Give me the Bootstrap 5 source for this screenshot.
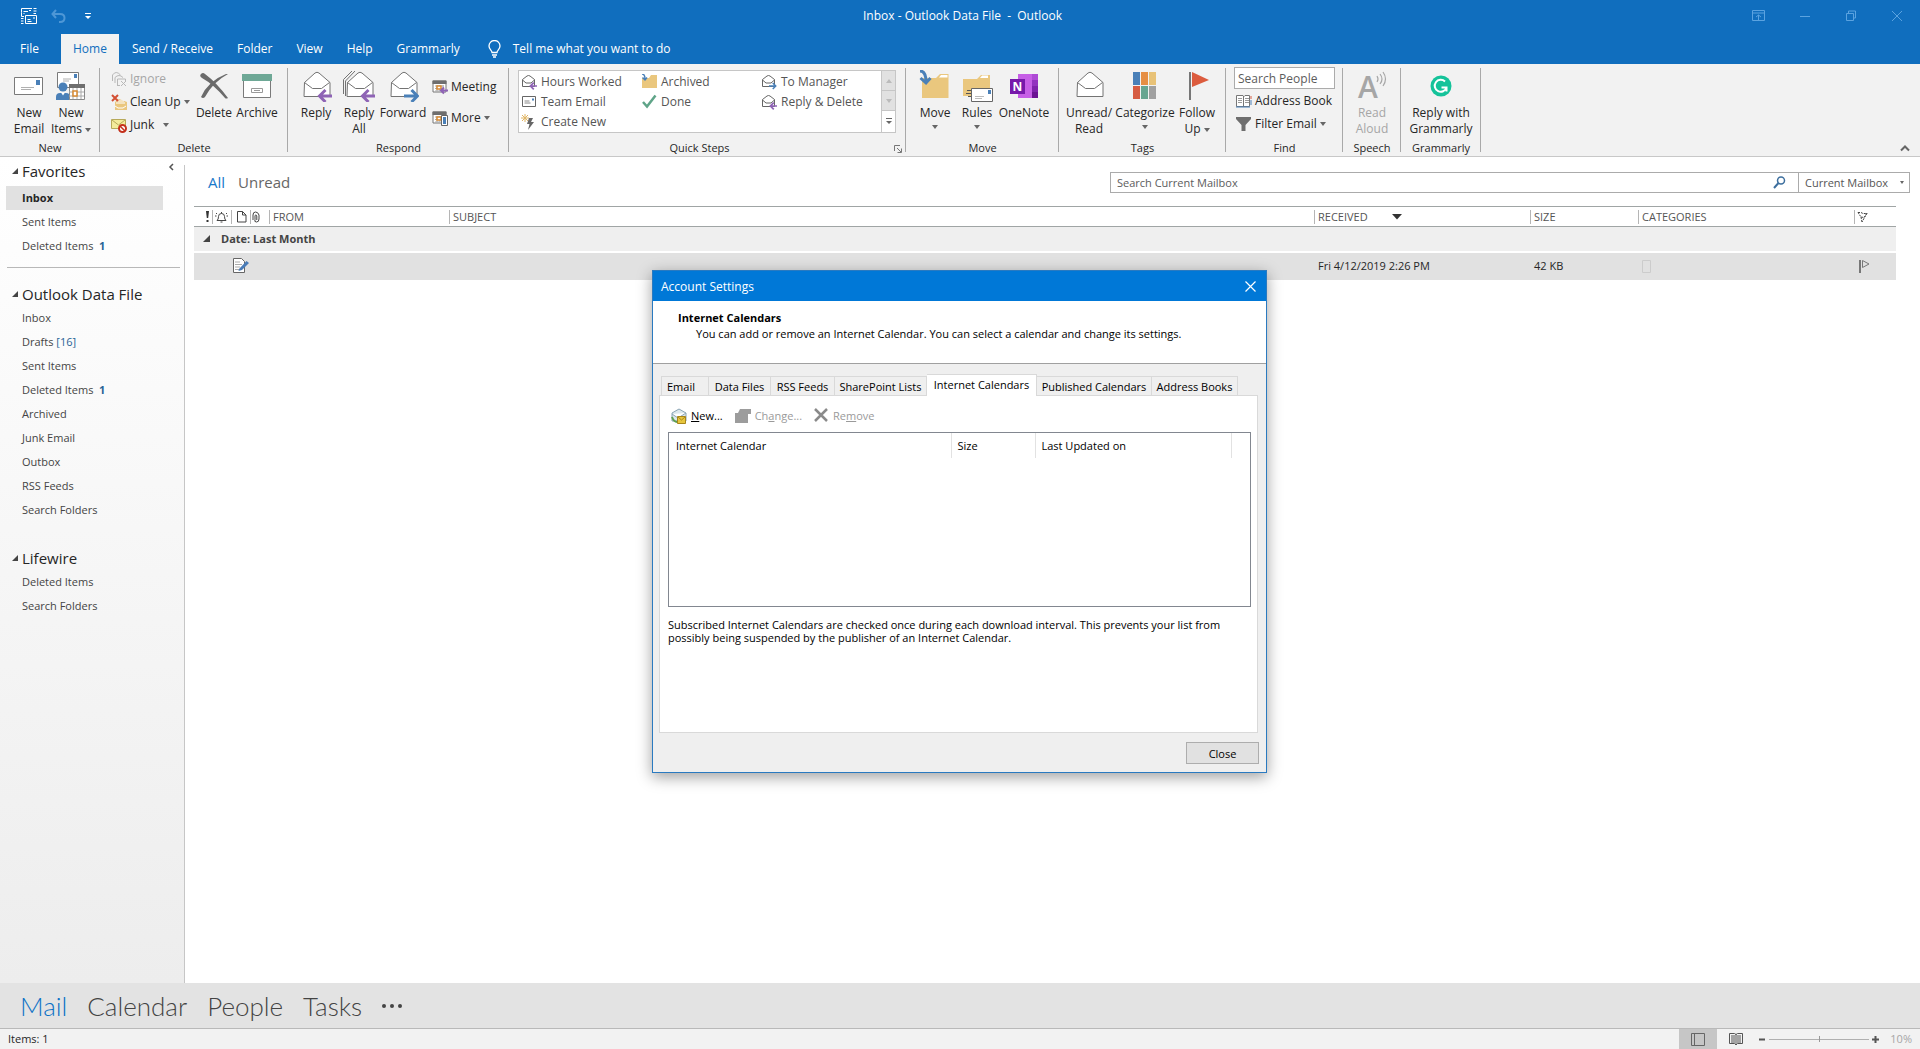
<!DOCTYPE html>
<html lang="en">
<head>
<meta charset="utf-8">
<meta name="viewport" content="width=device-width, initial-scale=1">
<title>Inbox - Outlook Data File - Outlook</title>
<link href="https://cdn.jsdelivr.net/npm/bootstrap@5.3.0/dist/css/bootstrap.min.css" rel="stylesheet">
<style>
:root{--blue:#106ebe;--ribbon:#f2f2f2;--line:#ababab}
body{font-family:"Open Sans","Noto Sans",sans-serif;font-size:12px;line-height:16px;color:#262626;background:#fff}
svg{display:block;flex:none}
button{background:none;border:0;padding:0;color:inherit;text-align:left}
a{color:inherit;text-decoration:none}
.app{min-height:100vh}
.topbar{background:var(--blue);color:#fff}
.titlebar{height:34px;padding-bottom:2px}
.titlebar .side{flex:1 1 0}
.winbtns{gap:32px;padding-right:16px;color:#5ba3e0}
.qat{gap:14px;padding-left:21px}
.tabs a{padding:7px 12px;height:30px}
.tabs a.file{width:61px;padding-left:20px}
.tabs a.on{background:var(--ribbon);color:var(--blue);margin-right:1px}
.tellme{padding-left:16px;gap:12px}
.ribbon{background:var(--ribbon);border-bottom:1px solid #c8c8c8;height:93px}
.grp{position:relative;display:flex;flex-direction:column}
.grp::after{content:"";position:absolute;right:0;top:4px;bottom:4px;width:1px;background:#a9a9a9}
.grp-body{height:76px;display:flex;align-items:flex-start}
.grp-name{text-align:center;line-height:16px;font-size:11px}
.big{display:flex;flex-direction:column;align-items:center;padding-top:6px;white-space:nowrap;text-align:center}
.big svg.ic{margin-bottom:3px}
.w38{width:38px}.w42{width:42px}.w44{width:44px}.w48{width:48px}.w52{width:52px}.w58{width:58px}.w60{width:60px}.w80{width:80px}
.small-btn{display:flex;align-items:center;gap:3px;height:23px;white-space:nowrap}
.car{display:inline-block;border:3px solid transparent;border-top:4px solid #666;border-bottom:0;vertical-align:middle;margin-left:3px}
.dim{color:#a6a6a6}
.pad-s{padding-left:2px}
.del-col{width:90px;padding:3px 0 0 9px}
.resp-col{padding:11px 0 0 7px;gap:8px}
.gallery{width:378px;height:63px;margin:6px 0 0 9px;background:#fff;border:1px solid #c6c6c6;color:#555}
.gallery .steps{display:grid;grid-template-columns:120px 120px 120px;grid-template-rows:20px 20px 20px;padding:1px 0 0 2px;flex:1}
.gallery .steps button{display:flex;gap:4px;align-items:center;white-space:nowrap}
.gal-scroll{width:16px;border-left:1px solid #c6c6c6}
.gal-scroll button{display:flex;align-items:center;justify-content:center;height:20px;width:100%}
.gal-scroll button:disabled{background:#e1e1e1;border-bottom:1px solid #c6c6c6}
.launch{position:absolute;right:4px;bottom:3px}
.people{width:101px;height:22px;border:1px solid #ababab;padding:0 3px;font-size:12px;color:#555;background:#fff;margin-top:3px}
.people::placeholder,.find-box::placeholder{color:#5c5c5c;opacity:1}
.side-nav{width:185px;background:linear-gradient(#fff,#f7f7f7 45%,#ededed);padding-top:2px;position:relative}
.side-nav::after{content:"";position:absolute;right:0;top:8px;bottom:0;width:1px;background:#c6c6c6}
.side-nav h2{font-size:15px;line-height:24px;font-weight:400;margin:0;padding-left:12px;display:flex;align-items:center;gap:4px}
.side-nav .fold{display:block;height:24px;line-height:24px;padding-left:16px;margin:0 22px 0 6px;color:#444;font-size:11px}
.side-nav .fold.on{background:#e1e1e1;font-weight:700;color:#262626}
.side-nav .num{color:#2a6496}
.side-nav hr{margin:9px 5px 14px 7px;border-color:#b8b8b8;opacity:1}
.fold-first{margin-top:3px!important}
.side-nav h2.later{margin-top:24px}
.collapse-pane{padding:0 11px 9px 0}
.list-area{padding:15px 10px 0 9px;min-width:0}
.filters{font-size:15px;line-height:20px;gap:13px;padding-left:14px;color:#666}
.searchbar{width:800px;height:21px;border:1px solid var(--line);background:#fff}
.find-box{flex:1;border:0;padding:0 6px;font-size:11px;min-width:0;height:19px}
.scope{border:0;border-left:1px solid var(--line);width:111px;height:19px;padding:0 6px;font-size:11px;color:#555;appearance:none;background:#fff}
.scopewrap{position:relative}
.scopewrap .car{position:absolute;right:5px;top:8px;pointer-events:none;border-width:3px 2px 0}
.mail{table-layout:fixed;width:calc(100% - 14px);margin-top:13px;border-collapse:collapse}
.mail th{font-size:11px;font-weight:400;color:#555;height:20px;padding:0;border-top:1px solid #a0a5a5;border-bottom:1px solid #a0a5a5;line-height:14px}
.mail th>div{border-right:1px solid #b5b5b5;height:14px;padding-left:3px;display:flex;align-items:center}
.mail th.ico>div{padding:0 2px 0 0;justify-content:center}
.mail th:last-child>div{border:0;padding-left:2px}
.mail .gh td{background:#efefef;border-bottom:2px solid #fff;height:25px;font-weight:700;color:#444;font-size:11px;padding:0}
.gh-in{gap:11px;padding-left:9px}
.mail .it td{background:#e1e1e1;height:28px;padding:0 0 0 3px;font-size:11px}
.sortmark{margin-left:24px}
.modbar{background:#e3e3e3;border-bottom:1px solid #b9b9b9;height:46px;font-family:Lato,"Open Sans",sans-serif;font-size:26px;font-weight:300;line-height:46px;padding-left:20px;gap:20px;color:#444}
.status{background:var(--ribbon);height:20px;font-size:11px;line-height:18px}
.vw{width:38px;height:20px;display:flex;align-items:center;justify-content:center}
.vw.on{background:#c6c6c6}
.zoomer{appearance:none;width:100px;height:10px;margin:0 3px;background:linear-gradient(#999,#999) 50% 50%/1px 6px no-repeat,linear-gradient(#b0b0b0,#b0b0b0) 0 50%/100% 1px no-repeat}
.zoomer::-webkit-slider-thumb{appearance:none;width:0;height:0}
.pct{margin:0 8px 0 11px}
.dlg{position:absolute;left:50%;top:270px;width:615px;margin-left:-308px;border:1px solid #2a7ac0;background:#efefef;box-shadow:0 4px 14px rgba(0,0,0,.38);color:#000;font-size:11px;line-height:13px}
.dlg-title{background:#0078d7;color:#fff;height:30px;padding:0 10px 0 8px;font-size:12px}
.dlg-head{background:#fff;border-bottom:1px solid #a0a0a0;height:63px;padding:10px 24px 10px 25px}
.dlg-head h1{font-size:11px;line-height:13px;font-weight:700;margin:0 0 3px}
.dlg-head p{margin:0 0 0 18px}
.dlg-tabs{padding:10px 0 0 8px;align-items:flex-end}
.dlg-tabs button{height:19px;border:1px solid #d9d9d9;border-left:0;border-bottom:0;text-align:center;white-space:nowrap;display:flex;justify-content:center;align-items:center}
.dlg-tabs button:first-child{border-left:1px solid #d9d9d9;justify-content:flex-start;padding-left:5px}
.dlg-tabs button.on{background:#fff;height:22px;margin-bottom:-1px;z-index:1;padding-bottom:3px}
.t48{width:48px}.t62{width:62px}.t64{width:64px}.t92{width:92px}.t110{width:110px}.t115{width:115px}.t86{width:86px}
.pane{background:#fff;border:1px solid #d9d9d9;margin:0 8px 0 6px;height:338px;padding:9px 6px 0 8px}
.tools{height:21px;gap:12px;padding-left:3px}
.tools button{display:flex;align-items:center;gap:4px}
.tools button:disabled{color:#9a9a9a}
.cals{margin-top:6px;height:175px;border:1px solid #828790;background:#fff}
.cals table{table-layout:fixed;width:563px}
.cals th{font-weight:400;height:25px;padding:0 0 0 6px;border-right:1px solid #e2e2e2}
.cals th:first-child{padding-left:7px}
.note{margin:11px 0 0}
.closer{background:#e1e1e1;border:1px solid #adadad;width:73px;height:22px;text-align:center;margin:9px 7px 8px 0}
</style>
</head>
<body>
<svg width="0" height="0" class="position-absolute" aria-hidden="true">
<symbol id="env" viewBox="0 0 32 32"><path d="M4.500 12.500L15 3q2-1.500 4 0l11 9.500v14h-26z" fill="#fff" stroke="#737373"/><path d="M4.500 12.500l8 6h9l8-6" fill="none" stroke="#737373"/></symbol>
<symbol id="left" viewBox="0 0 16 14"><path d="M16 7H3M8.500 1L2.500 7l6 6" fill="none" stroke="#8e63b5" stroke-width="3"/></symbol>
<symbol id="right" viewBox="0 0 16 14"><path d="M0 7h13M7.500 1l6 6-6 6" fill="none" stroke="#4a80b8" stroke-width="3"/></symbol>
<symbol id="senv" viewBox="0 0 16 16"><path d="M1.500 5.500L6 2q1.500-1 3 0l4.500 3.500v7h-12z" fill="#fff" stroke="#666"/><path d="M1.500 6l3.500 3h5l3.500-3" fill="none" stroke="#666"/></symbol>
<symbol id="folder" viewBox="0 0 32 32"><path d="M3 28V8h14l4-4h8.500v24z" fill="#eac77e"/><path d="M20 7.500L22 5h6.500v2.500z" fill="#fff"/></symbol>
<symbol id="cal" viewBox="0 0 16 16"><path d="M1 2h13v11H1z" fill="#fff" stroke="#777"/><path d="M.5 1.500h14V5H.5z" fill="#6e6e6e"/><path d="M3 7h9M3 9.500h9M3 12h5M5 6v6M8 6v6M11 6v5" stroke="#aaa" fill="none"/><path d="M5 7h4v3H5z" fill="#fff" stroke="#d98b32" stroke-width="1.500"/></symbol>
<symbol id="tri" viewBox="0 0 6 6"><path d="M6 0v6H0z" fill="#444"/></symbol>
</svg>
<div class="app d-flex flex-column position-relative">
<header class="topbar">
  <div class="titlebar d-flex align-items-center">
    <div class="side qat d-flex align-items-center">
      <button aria-label="Send and receive all folders"><svg width="16" height="16" fill="none" stroke="#fff"><path d="M11 .5H.5v4M.5 4.500v4H3M2.500 3.500H7M2.500 5.500h1M8 2.500h2M12.500.5h3M12.500 3h3M12.500 5.500H15M0 10.500h2.500M0 13h2.500M0 15.500h2.500"/><path d="M4.500 7.500h11v8h-11zM6.500 13.500h4M6.500 11.500h3M12 10h2"/></svg></button>
      <button aria-label="Undo"><svg width="15" height="14" fill="none" stroke="#4e97d6" stroke-width="2"><path d="M5 1L1.500 5 5 9M2 5h7q4.500 0 4.500 4T9 13H8"/></svg></button>
      <button aria-label="Customize quick access" class="ms-1"><svg width="8" height="10"><path d="M1 2.500h6" stroke="#fff"/><path d="M1 5h6L4 8z" fill="#fff"/></svg></button>
    </div>
    <div>Inbox - Outlook Data File&nbsp; -&nbsp; Outlook</div>
    <div class="side winbtns d-flex justify-content-end align-items-center">
      <button aria-label="Ribbon display options"><svg width="14" height="12" fill="none" stroke="currentColor"><path d="M.5.5h12v10H.5zM.5 3h12M6.500 10V5M4 7l2.500-2L9 7"/></svg></button>
      <button aria-label="Minimize"><svg width="14" height="12" stroke="currentColor"><path d="M2 6.500h10"/></svg></button>
      <button aria-label="Restore"><svg width="14" height="12" fill="none" stroke="currentColor"><path d="M2.500 3.500h7v7h-7zM4.500 3V1h7v7h-2"/></svg></button>
      <button aria-label="Close window"><svg width="14" height="12" stroke="currentColor"><path d="M2 1l10 10M12 1L2 11"/></svg></button>
    </div>
  </div>
  <nav class="tabs d-flex">
    <a class="file" href="#">File</a><a class="on" href="#">Home</a><a href="#">Send / Receive</a><a href="#">Folder</a><a href="#">View</a><a href="#">Help</a><a href="#">Grammarly</a>
    <button class="tellme d-flex align-items-center"><svg width="13" height="18" fill="none" stroke="#fff" stroke-width="1.300"><path d="M4 12.500c0-2-3-3-3-6.500a5.500 5.500 0 0111 0c0 3.500-3 4.500-3 6.500zM4 15h5M5 17h3"/></svg>Tell me what you want to do</button>
  </nav>
</header>

<section class="ribbon d-flex" aria-label="Ribbon">
  <div class="grp" style="width:100px"><div class="grp-body ps-2">
    <button class="big w42"><svg class="ic" width="32" height="32"><path d="M1.500 7.500h28v17h-28z" fill="#fff" stroke="#7a7a7a"/><path d="M23 10h4v5h-4z" fill="#4a80b8"/><path d="M8 17.500h13M8 19.500h10" stroke="#b0b0b0"/></svg>New<br>Email</button>
    <button class="big w42"><svg class="ic" width="32" height="32"><path d="M2.500 2.500h21v15h-21z" fill="#fff" stroke="#7a7a7a"/><path d="M19 4h3v4h-3z" fill="#4a80b8"/><path d="M8 9h8M8 11h6" stroke="#b0b0b0"/><circle cx="8" cy="17" r="4.500" fill="#4a80b8"/><path d="M1 30v-3q0-4 4-4h6q4 0 4 4v3z" fill="#4a80b8"/><path d="M6 22.500l2 3 2-3z" fill="#fff"/><path d="M14.500 15.500h15v14h-15z" fill="#fff" stroke="#8a8a8a"/><path d="M14 14h16v4H14z" fill="#6e6e6e"/><path d="M14 22h15M14 26h15M18 18v11M26 18v11M22 18v11" stroke="#aaa"/><path d="M18 21h4v5h-4z" fill="#fff" stroke="#d98b32" stroke-width="1.500"/></svg>New<span>Items<i class="car"></i></span></button>
  </div><div class="grp-name">New</div></div>

  <div class="grp" style="width:188px"><div class="grp-body">
    <div class="del-col">
      <button class="small-btn dim pad-s" disabled><svg width="16" height="16" fill="none" stroke="#b8b8b8"><path d="M1.500 10V4q3.500-5 8 0M4 12V6.500q4-4 8 0M6.500 14V8h8v2M6 14.500h3M10 10l5 5M15 10l-5 5"/></svg>Ignore</button>
      <button class="small-btn pad-s"><svg width="16" height="16"><path d="M4 8l4-3 8 3v8H4z" fill="#eac77e"/><path d="M5 9h9M6 7h7M4 12l3 2h5l3-2" stroke="#fff" fill="none"/><path d="M1 1l6 6M7 1L1 7" stroke="#d34f33" stroke-width="2"/></svg><span>Clean Up<i class="car"></i></span></button>
      <button class="small-btn pad-s"><svg width="16" height="16"><path d="M.5 2.500h14v9H.5z" fill="#f3eb9b" stroke="#b7a95a"/><path d="M1 3l6.500 5L14 3" fill="none" stroke="#b7a95a"/><circle cx="11.500" cy="11.500" r="3.500" fill="#fff" stroke="#c4301c" stroke-width="2"/><path d="M9 9l5 5" stroke="#c4301c" stroke-width="1.500"/></svg><span>Junk &nbsp;<i class="car"></i></span></button>
    </div>
    <button class="big w48"><svg class="ic" width="32" height="32"><path d="M3 4q2-2 4 0 11 8 23 24-2 1-3 0Q15 14 4 8 1 6 3 4z" fill="#6b6b6b"/><path d="M30 4Q15 12 7 27q-2 2-4 0Q10 11 28 4z" fill="#6b6b6b"/></svg>Delete</button>
    <button class="big w38"><svg class="ic" width="32" height="32"><path d="M2.500 8.500h27v19h-27z" fill="#fff" stroke="#7a7a7a"/><path d="M1 4h30v7H1z" fill="#6ea896"/><path d="M10.500 18.500h11v4h-11zM13 20.500h6" fill="#fff" stroke="#999"/></svg>Archive</button>
  </div><div class="grp-name">Delete</div></div>

  <div class="grp" style="width:221px"><div class="grp-body" style="padding-left:7px">
    <button class="big w42"><svg class="ic" width="32" height="32"><use href="#env"/><use href="#left" x="17" y="19" width="16" height="14"/></svg>Reply</button>
    <button class="big w44"><svg class="ic" width="32" height="32"><path d="M.5 24V9.500L9 1" fill="none" stroke="#737373"/><path d="M2.500 26V11L12 1" fill="none" stroke="#737373"/><use href="#env"/><use href="#left" x="17" y="19" width="16" height="14"/></svg>Reply<br>All</button>
    <button class="big w44"><svg class="ic" width="32" height="32"><use href="#env"/><use href="#right" x="17" y="19" width="16" height="14"/></svg>Forward</button>
    <div class="resp-col d-flex flex-column">
      <button class="small-btn"><svg width="16" height="16"><use href="#cal"/><path d="M16 11.500H9.500M12 8.500l-3 3 3 3" fill="none" stroke="#8e63b5" stroke-width="2"/></svg>Meeting</button>
      <button class="small-btn"><svg width="16" height="16"><use href="#cal"/><path d="M9.500 5.500h6v10h-6z" fill="#fff" stroke="#666"/><path d="M11 7h3v7h-3z" fill="#4a80b8"/></svg><span>More<i class="car"></i></span></button>
    </div>
  </div><div class="grp-name">Respond</div></div>

  <div class="grp" style="width:397px"><div class="grp-body">
    <div class="gallery d-flex">
      <div class="steps">
        <button><svg width="16" height="16"><use href="#senv"/><use href="#left" x="8" y="8" width="9" height="8"/></svg>Hours Worked</button>
        <button><svg width="16" height="16"><path d="M1 14V4h7l2-3h6v13z" fill="#eac77e"/><path d="M1 0q3 0 3 5M1.500 3.500L4 6l2-2.500" fill="none" stroke="#4a80b8" stroke-width="1.500"/></svg>Archived</button>
        <button><svg width="16" height="16"><use href="#senv"/><use href="#right" x="8" y="8" width="8" height="8"/></svg>To Manager</button>
        <button><svg width="16" height="16"><path d="M1.500 2.500h13v10h-13z" fill="#fff" stroke="#666"/><path d="M11 4.500h2v2h-2z" fill="#4a80b8"/><path d="M3.500 7h5M3.500 9h6" stroke="#888"/></svg>Team Email</button>
        <button><svg width="16" height="16"><path d="M2 8l4 4.500L14.500 1.500" fill="none" stroke="#5fa488" stroke-width="2.500"/></svg>Done</button>
        <button><svg width="16" height="16"><use href="#senv"/><use href="#left" x="8" y="8" width="9" height="8"/></svg>Reply &amp; Delete</button>
        <button><svg width="16" height="16"><path d="M4 0v8M0 4h8M1 1l6 6M7 1L1 7" stroke="#e0b565"/><path d="M8 4h4l-2 4h3l-6 8 1.500-6H6z" fill="#666"/></svg>Create New</button>
      </div>
      <div class="gal-scroll">
        <button disabled aria-label="Scroll up"><svg width="6" height="4"><path d="M0 4h6L3 0z" fill="#bbb"/></svg></button>
        <button disabled aria-label="Scroll down"><svg width="6" height="4"><path d="M0 0h6L3 4z" fill="#bbb"/></svg></button>
        <button aria-label="More quick steps"><svg width="8" height="8"><path d="M1 1.500h6" stroke="#666"/><path d="M1 4h6L4 7z" fill="#666"/></svg></button>
      </div>
    </div>
  </div><div class="grp-name pe-3">Quick Steps</div>
  <button class="launch" aria-label="Manage quick steps"><svg width="8" height="8"><path d="M.5 6V.5H6M3 3l4 4M7.500 3.500v4h-4" fill="none" stroke="#777"/></svg></button></div>

  <div class="grp" style="width:153px"><div class="grp-body ps-2">
    <button class="big w42"><svg class="ic" width="32" height="32"><use href="#folder"/><path d="M1 1q6 0 6 11M1.500 8L7 13l4.500-5" fill="none" stroke="#4a80b8" stroke-width="3"/></svg>Move<i class="car mt-1 ms-0"></i></button>
    <button class="big w42"><svg class="ic" width="32" height="32"><path d="M2 26V9h14l4-4h9v21z" fill="#eac77e"/><path d="M19 8l2-2.500h6V8z" fill="#fff"/><path d="M6 20.500h4M5 23.500h5M7 26.500h3" stroke="#555"/><path d="M10.500 18.500h21v13h-21z" fill="#fff" stroke="#666"/><path d="M27 20h3v4h-3z" fill="#4a80b8"/><path d="M14 26.500h9M14 28.500h7" stroke="#bbb"/></svg>Rules<i class="car mt-1 ms-0"></i></button>
    <button class="big w52"><svg class="ic" width="32" height="32"><path d="M10 4h14v24H10z" fill="#c65ee6"/><path d="M24 4h6v6h-6z" fill="#ae4bd5"/><path d="M24 10h6v6h-6z" fill="#9332bf"/><path d="M24 16h6v6h-6z" fill="#7f22ab"/><path d="M24 22h6v6h-6z" fill="#6b1293"/><path d="M2 9h15v15H2z" fill="#7719aa"/><text x="9.500" y="21" text-anchor="middle" font-size="12" font-weight="700" fill="#fff">N</text></svg>OneNote</button>
  </div><div class="grp-name">Move</div></div>

  <div class="grp" style="width:167px"><div class="grp-body ps-1">
    <button class="big w52"><svg class="ic" width="32" height="32"><use href="#env"/></svg>Unread/<br>Read</button>
    <button class="big w60"><svg class="ic" width="32" height="32"><path d="M4 2h7v13H4z" fill="#4a80b8"/><path d="M12 2h7v13h-7z" fill="#e68f44"/><path d="M20 2h7v13h-7z" fill="#e8c277"/><path d="M4 16h7v13H4z" fill="#d65c42"/><path d="M12 16h7v13h-7z" fill="#68a691"/><path d="M20 16h7v13h-7z" fill="#a0a0a0"/></svg>Categorize<i class="car mt-1 ms-0"></i></button>
    <button class="big w44"><svg class="ic" width="32" height="32"><path d="M8 2h2v28H8z" fill="#777"/><path d="M11 2l17 8-17 7z" fill="#dc5c3e"/></svg>Follow<span>Up<i class="car"></i></span></button>
  </div><div class="grp-name">Tags</div></div>

  <div class="grp" style="width:117px"><div class="grp-body ps-2 flex-column">
    <input class="people" type="text" placeholder="Search People" aria-label="Search People">
    <button class="small-btn pad-s"><svg width="16" height="14"><path d="M.5 1.500H7l1 1 1-1h4.500v11H.5zM7.500 2v10" fill="#fff" stroke="#777"/><path d="M2 4.500h4M2 6.500h4M2 8.500h4M9 4.500h4M9 6.500h4M9 8.500h4" stroke="#999"/><path d="M15 2v3" stroke="#d65c42"/><path d="M15 6v5M0 13h14" stroke="#4a80b8"/></svg>Address Book</button>
    <button class="small-btn pad-s"><svg width="16" height="14"><path d="M0 0h15v2L9.500 8v6h-4V8L0 2z" fill="#6e6e6e"/></svg><span>Filter Email<i class="car"></i></span></button>
  </div><div class="grp-name">Find</div></div>

  <div class="grp" style="width:58px"><div class="grp-body">
    <button class="big w58 dim" disabled><svg class="ic overflow-visible" width="32" height="32" fill="none" stroke="#a6a6a6"><text x="12" y="28" text-anchor="middle" font-size="30" font-weight="600" fill="#a6a6a6" stroke="none">A</text><path d="M21 6q2 3 0 6M24 4q4 5 0 10M27 2q5 7 0 14" stroke-width="1.200"/></svg>Read<br>Aloud</button>
  </div><div class="grp-name">Speech</div></div>

  <div class="grp" style="width:80px"><div class="grp-body">
    <button class="big w80"><svg class="ic" width="32" height="32"><circle cx="16" cy="16" r="10.500" fill="#15c39a"/><path d="M20 11.500a6 6 0 101.500 6M16.500 17.500h5v4" fill="none" stroke="#fff" stroke-width="2"/></svg>Reply with<br>Grammarly</button>
  </div><div class="grp-name">Grammarly</div></div>
  <button class="ms-auto align-self-end pe-2 pb-1" aria-label="Collapse ribbon"><svg width="12" height="8"><path d="M1 6.500L5 2.500l4 4" fill="none" stroke="#666" stroke-width="2"/></svg></button>
</section>

<div class="d-flex flex-grow-1">
  <nav class="side-nav flex-shrink-0" aria-label="Folders">
    <h2><svg width="6" height="6"><use href="#tri"/></svg>Favorites<button class="ms-auto collapse-pane" aria-label="Collapse folder pane"><svg width="6" height="8"><path d="M5 1L2 4l3 3" fill="none" stroke="#555" stroke-width="1.500"/></svg></button></h2>
    <a class="fold on fold-first" href="#">Inbox</a>
    <a class="fold" href="#">Sent Items</a>
    <a class="fold" href="#">Deleted Items &nbsp;<b class="num">1</b></a>
    <hr>
    <h2><svg width="6" height="6"><use href="#tri"/></svg>Outlook Data File</h2>
    <a class="fold" href="#">Inbox</a>
    <a class="fold" href="#">Drafts <span class="num">[16]</span></a>
    <a class="fold" href="#">Sent Items</a>
    <a class="fold" href="#">Deleted Items &nbsp;<b class="num">1</b></a>
    <a class="fold" href="#">Archived</a>
    <a class="fold" href="#">Junk Email</a>
    <a class="fold" href="#">Outbox</a>
    <a class="fold" href="#">RSS Feeds</a>
    <a class="fold" href="#">Search Folders</a>
    <h2 class="later"><svg width="6" height="6"><use href="#tri"/></svg>Lifewire</h2>
    <a class="fold" href="#">Deleted Items</a>
    <a class="fold" href="#">Search Folders</a>
  </nav>
  <main class="list-area flex-grow-1">
    <div class="d-flex justify-content-between align-items-start">
      <div class="filters d-flex"><a href="#" style="color:#1979ca">All</a><a href="#">Unread</a></div>
      <div class="searchbar d-flex align-items-center">
        <input class="find-box" type="search" placeholder="Search Current Mailbox" aria-label="Search Current Mailbox">
        <svg width="13" height="13" class="me-2" fill="none" stroke="#3d6f9e"><circle cx="8" cy="4.500" r="3.500" stroke-width="1.500"/><path d="M5.500 7L1 12" stroke-width="2"/></svg>
        <span class="scopewrap ms-1 d-flex"><select class="scope" aria-label="Search scope"><option>Current Mailbox</option></select><i class="car"></i></span>
      </div>
    </div>
    <table class="mail">
      <colgroup><col style="width:19px"><col style="width:19px"><col style="width:19px"><col style="width:19px"><col style="width:180px"><col><col style="width:216px"><col style="width:108px"><col style="width:216px"><col style="width:41px"></colgroup>
      <thead><tr>
        <th class="ico"><div class="justify-content-end"><svg width="4" height="11"><path d="M0 0h3L2.200 7H.8zM.5 9h2v2h-2z" fill="#333"/></svg></div></th>
        <th class="ico"><div><svg width="13" height="12" fill="none" stroke="#444"><path d="M2 9.500q1.500-1 1.500-4 0-3 3-3t3 3q0 3 1.500 4zM5.500 11h2M6.500 2.500V1M1 2l1 1M12 2l-1 1M0 5h1.500M11.500 5H13"/></svg></div></th>
        <th class="ico"><div class="justify-content-end"><svg width="11" height="12" fill="none" stroke="#444"><path d="M.5.5h5l3.500 3.500v7H.5zM5.500.5V4H9"/></svg></div></th>
        <th class="ico"><div class="justify-content-start"><svg width="11" height="12" fill="none" stroke="#444"><path d="M2 9V4q0-3 2.500-3T8 4v4q0 3-2.500 3T4 8.500V5q0-1 .8-1t1 1v4"/></svg></div></th>
        <th><div>FROM</div></th><th><div>SUBJECT</div></th>
        <th><div>RECEIVED<svg width="10" height="6" class="sortmark"><path d="M0 0h10L5 5.500z" fill="#333"/></svg></div></th>
        <th><div>SIZE</div></th><th><div>CATEGORIES</div></th>
        <th><div aria-label="Flag"><svg width="11" height="12" fill="none" stroke="#444"><path d="M1 1.500h3l2 1h4L7 6.500 4 6 1 1.500M4 6l1 5M10 2L5 11" stroke-dasharray="2 1"/></svg></div></th>
      </tr></thead>
      <tbody>
        <tr class="gh"><td colspan="10"><div class="gh-in d-flex align-items-center"><svg width="7" height="7"><use href="#tri"/></svg>Date: Last Month</div></td></tr>
        <tr class="it"><td></td><td></td><td colspan="3" class="ps-0"><svg width="18" height="18"><path d="M1.500 1.500h8l3 3v11h-11z" fill="#fff" stroke="#666"/><path d="M3 5h5M3 7.500h7M3 10h5M3 12.500h4" stroke="#aaa"/><path d="M7 12l7.500-8L17 6l-7 7-3.500 1z" fill="#4a7cb8"/></svg></td><td></td><td>Fri 4/12/2019 2:26 PM</td><td>42 KB</td><td><svg width="10" height="13"><path d="M.5.5h8v12h-8z" fill="none" stroke="#ccc"/></svg></td><td><svg width="14" height="15" fill="none" stroke="#777"><path d="M2 1v13" stroke-width="2"/><path d="M4.500 1.500L11 5 4.500 8.500z"/></svg></td></tr>
      </tbody>
    </table>
  </main>
</div>

<nav class="modbar d-flex" aria-label="Modules">
  <a href="#" style="color:#0e72c6">Mail</a><a href="#">Calendar</a><a href="#">People</a><a href="#">Tasks</a>
  <button aria-label="More modules" class="d-flex align-items-center"><svg width="20" height="6" fill="#444"><circle cx="2" cy="3" r="2"/><circle cx="10" cy="3" r="2"/><circle cx="18" cy="3" r="2"/></svg></button>
</nav>
<footer class="status d-flex align-items-center">
  <span class="ps-2">Items: 1</span>
  <button class="vw on ms-auto" aria-label="Normal view"><svg width="14" height="13" fill="none" stroke="#666"><path d="M.5.5h13v12H.5zM3.500.5v12"/></svg></button>
  <button class="vw" aria-label="Reading view"><svg width="14" height="13" fill="none" stroke="#555"><path d="M.5.500h5l1.500 1 1.500-1h5v10h-5L7 12l-1.500-1.500h-5zM7 1v11M2 3h4M2 5h4M2 7h4M2 9h4M8 3h4M8 5h4M8 7h4M8 9h4"/></svg></button>
  <button aria-label="Zoom out" class="ms-1"><svg width="7" height="7"><path d="M0 3.500h6" stroke="#555" stroke-width="2"/></svg></button>
  <input class="zoomer" type="range" min="10" max="400" value="10" aria-label="Zoom">
  <button aria-label="Zoom in"><svg width="7" height="7"><path d="M0 3.500h7M3.500 0v7" stroke="#555" stroke-width="2"/></svg></button>
  <span class="pct dim">10%</span>
</footer>

<section class="dlg" role="dialog" aria-label="Account Settings">
  <div class="dlg-title d-flex align-items-center justify-content-between">Account Settings<button aria-label="Close dialog"><svg width="11" height="11" stroke="#fff" stroke-width="1.200"><path d="M.5.5l10 10M10.500.5l-10 10"/></svg></button></div>
  <div class="dlg-head"><h1>Internet Calendars</h1><p>You can add or remove an Internet Calendar. You can select a calendar and change its settings.</p></div>
  <div class="dlg-tabs d-flex" role="tablist">
    <button class="t48" role="tab">Email</button><button class="t62" role="tab">Data Files</button><button class="t64" role="tab">RSS Feeds</button><button class="t92" role="tab">SharePoint Lists</button><button class="t110 on position-relative" role="tab" aria-selected="true">Internet Calendars</button><button class="t115" role="tab">Published Calendars</button><button class="t86" role="tab">Address Books</button>
  </div>
  <div class="pane">
    <div class="tools d-flex">
      <button><svg width="16" height="16"><path d="M1 5l7-4 7 4v8H1z" fill="#dde8ee" stroke="#8aa4b4"/><path d="M1 6l6 4 8-5" fill="#fff" stroke="#8aa4b4"/><path d="M1 9q2 5 5 5" fill="none" stroke="#5f9f4f" stroke-width="2"/><path d="M6.500 8.500h8v7h-8z" fill="#e7c63d" stroke="#a8861a"/><path d="M7 9l3.500 3L14 9" fill="none" stroke="#a8861a"/></svg><span><u>N</u>ew...</span></button>
      <button disabled><svg width="16" height="16"><path d="M0 5h3l2-4h11v5h-3v9H0z" fill="#9c9c9c"/></svg><span>Ch<u>a</u>nge...</span></button>
      <button disabled><svg width="15" height="15" stroke="#8a8a8a" stroke-width="2.500"><path d="M1 1l12 12M13 1L1 13"/></svg><span>Re<u>m</u>ove</span></button>
    </div>
    <div class="cals"><table><colgroup><col style="width:282px"><col style="width:84px"><col></colgroup><thead><tr><th>Internet Calendar</th><th>Size</th><th>Last Updated on</th></tr></thead></table></div>
    <p class="note">Subscribed Internet Calendars are checked once during each download interval. This prevents your list from possibly being suspended by the publisher of an Internet Calendar.</p>
  </div>
  <div class="d-flex justify-content-end"><button class="closer">Close</button></div>
</section>
</div>
<script src="https://cdn.jsdelivr.net/npm/bootstrap@5.3.0/dist/js/bootstrap.bundle.min.js"></script>
</body>
</html>
